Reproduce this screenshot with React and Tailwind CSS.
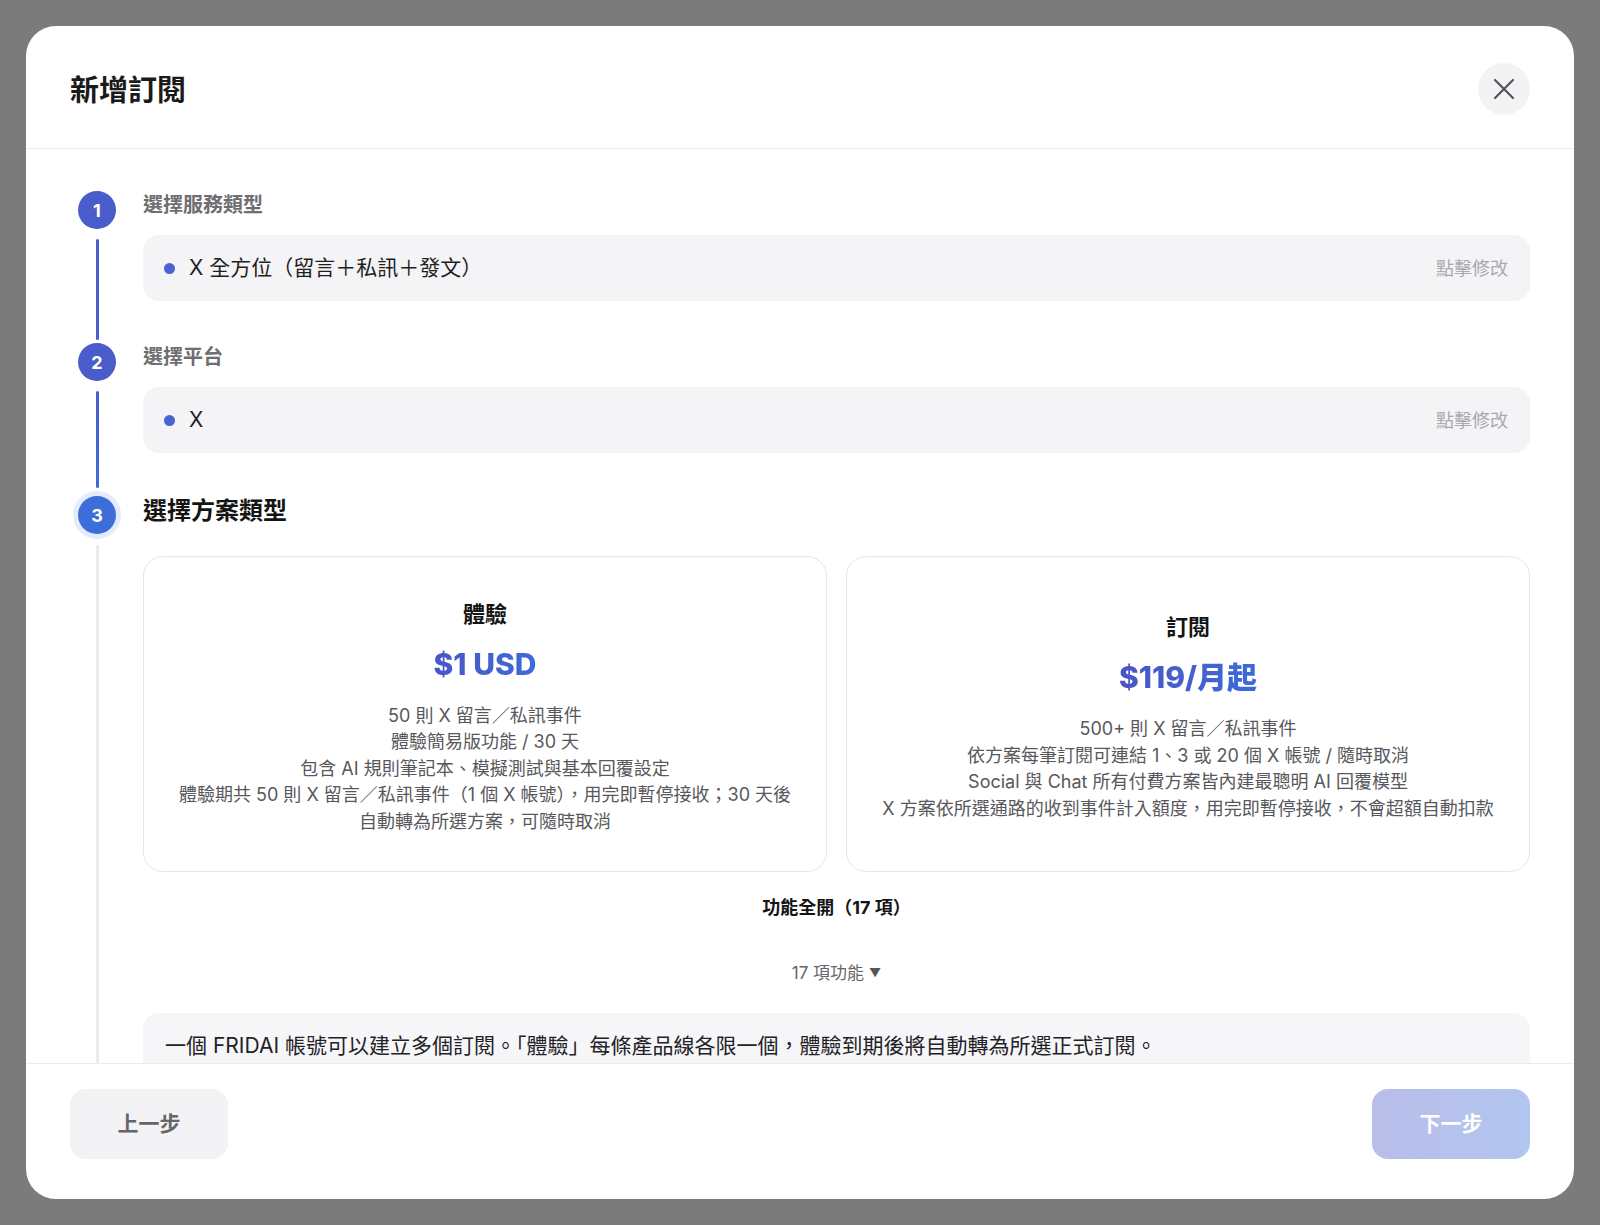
import React from 'react';

const steps = [
  { n: 1, label: '選擇服務類型', value: 'X 全方位（留言＋私訊＋發文）' },
  { n: 2, label: '選擇平台', value: 'X' },
];

const plans = [
  {
    id: 'trial',
    title: '體驗',
    price: '$1 USD',
    lines: [
      '50 則 X 留言／私訊事件',
      '體驗簡易版功能 / 30 天',
      '包含 AI 規則筆記本、模擬測試與基本回覆設定',
      '體驗期共 50 則 X 留言／私訊事件（1 個 X 帳號），用完即暫停接收；30 天後',
      '自動轉為所選方案，可隨時取消',
    ],
  },
  {
    id: 'sub',
    title: '訂閱',
    price: '$119/月起',
    lines: [
      '500+ 則 X 留言／私訊事件',
      '依方案每筆訂閱可連結 1、3 或 20 個 X 帳號 / 隨時取消',
      'Social 與 Chat 所有付費方案皆內建最聰明 AI 回覆模型',
      'X 方案依所選通路的收到事件計入額度，用完即暫停接收，不會超額自動扣款',
    ],
  },
];

const CloseIcon = () => (
  <svg width="22" height="22" viewBox="0 0 22 22" fill="none">
    <path d="M2 2L20 20M20 2L2 20" stroke="#555558" strokeWidth="2.2" strokeLinecap="round" />
  </svg>
);

const DoneStep = ({ step }) => (
  <div className="flex">
    <div className="w-[54px] shrink-0 flex flex-col items-center">
      <div className="w-[38px] h-[38px] rounded-full bg-[#4a5cc9] text-white text-[18px] font-bold flex items-center justify-center">
        {step.n}
      </div>
      <div className={`w-[3px] flex-1 mt-[10px] mb-[3px] rounded-full ${step.n === 2 ? 'bg-gradient-to-b from-[#4a5cc9] to-[#3e6dd8]' : 'bg-[#4a5cc9]'}`} />
    </div>
    <div className={`flex-1 ml-[19px] ${step.n === 1 ? 'pb-[42px]' : 'pb-[38px]'}`}>
      <div className="text-[20px] leading-[28px] font-bold text-[#6e6e72]">{step.label}</div>
      <div className="mt-[16px] h-[66px] rounded-[16px] bg-[#f4f4f6] flex items-center pl-[21px] pr-[22px]">
        <span className="w-[11px] h-[11px] rounded-full bg-[#4a63d0] shrink-0" />
        <span className="ml-[14px] text-[21px] text-[#1f1f22]">{step.value}</span>
        <span className="ml-auto text-[18px] text-[#a9a9ae]">點擊修改</span>
      </div>
    </div>
  </div>
);

const PlanCard = ({ plan }) => (
  <div className="min-h-[316px] rounded-[20px] border border-[#e6e6ea] bg-white flex flex-col items-center justify-center px-6 pt-[6px] text-center">
    <div className="text-[22px] leading-[30px] font-bold text-[#141414]">{plan.title}</div>
    <div className="mt-[15px] text-[30px] leading-[40px] font-extrabold bg-gradient-to-r from-[#4a55c6] to-[#3b6bd7] bg-clip-text text-transparent">
      {plan.price}
    </div>
    <div className="mt-[19px] text-[18px] leading-[26.5px] text-[#58585c]">
      {plan.lines.map((l) => (
        <p key={l}>{l}</p>
      ))}
    </div>
  </div>
);

export default function App() {
  return (
    <div className="w-full h-[1225px] bg-[#7b7b7b] p-[26px] font-['Inter','Noto_Sans_CJK_TC',sans-serif]">
      <div className="h-full bg-white rounded-[30px] overflow-hidden flex flex-col">
        <header className="h-[123px] shrink-0 px-11 pt-1 flex items-center justify-between border-b border-[#ececef]">
          <h1 className="mt-[3px] text-[29px] font-bold text-[#1a1a1a]">新增訂閱</h1>
          <button className="w-[52px] h-[52px] rounded-full bg-[#f3f3f5] flex items-center justify-center">
            <CloseIcon />
          </button>
        </header>

        <div className="flex-1 overflow-hidden px-11 pt-[42px]">
          {steps.map((s) => (
            <DoneStep key={s.n} step={s} />
          ))}

          <div className="flex">
            <div className="w-[54px] shrink-0 flex flex-col items-center">
              <div className="w-[48px] h-[48px] rounded-full bg-[#e4ebfb] flex items-center justify-center">
                <div className="w-[38px] h-[38px] rounded-full bg-[#3d6dd8] text-white text-[18px] font-bold flex items-center justify-center">
                  3
                </div>
              </div>
              <div className="w-[3px] flex-1 mt-[6px] bg-[#ebebee] rounded-full" />
            </div>
            <div className="flex-1 ml-[19px] pb-10">
              <div className="text-[24px] leading-[40px] font-bold text-[#141414]">選擇方案類型</div>
              <div className="mt-[25px] grid grid-cols-2 gap-[19px]">
                {plans.map((p) => (
                  <PlanCard key={p.id} plan={p} />
                ))}
              </div>
              <div className="mt-[23px] text-center text-[18px] leading-[26px] font-bold text-[#141414]">功能全開（17 項）</div>
              <div className="mt-[39px] flex items-center justify-center gap-[5px] text-[17px] leading-[26px] text-[#66666a]">
                <span>17 項功能</span>
                <span className="text-[12px] text-[#555558]">▼</span>
              </div>
              <div className="mt-[27px] rounded-[16px] bg-[#f6f6f9] px-[22px] pt-[18px] pb-[40px] text-[21px] leading-[30px] text-[#222226]">
                <p>一個 FRIDAI 帳號可以建立多個訂閱。「體驗」每條產品線各限一個，體驗到期後將自動轉為所選正式訂閱。</p>
              </div>
            </div>
          </div>
        </div>

        <footer className="h-[136px] shrink-0 px-11 pt-[25px] flex items-start justify-between border-t border-[#ececef]">
          <button className="w-[158px] h-[70px] rounded-[16px] bg-[#f3f3f6] text-[21px] font-bold text-[#66666a]">上一步</button>
          <button className="w-[158px] h-[70px] rounded-[16px] bg-gradient-to-r from-[#b9bde9] to-[#b2c6ef] text-[21px] font-bold text-white">下一步</button>
        </footer>
      </div>
    </div>
  );
}
